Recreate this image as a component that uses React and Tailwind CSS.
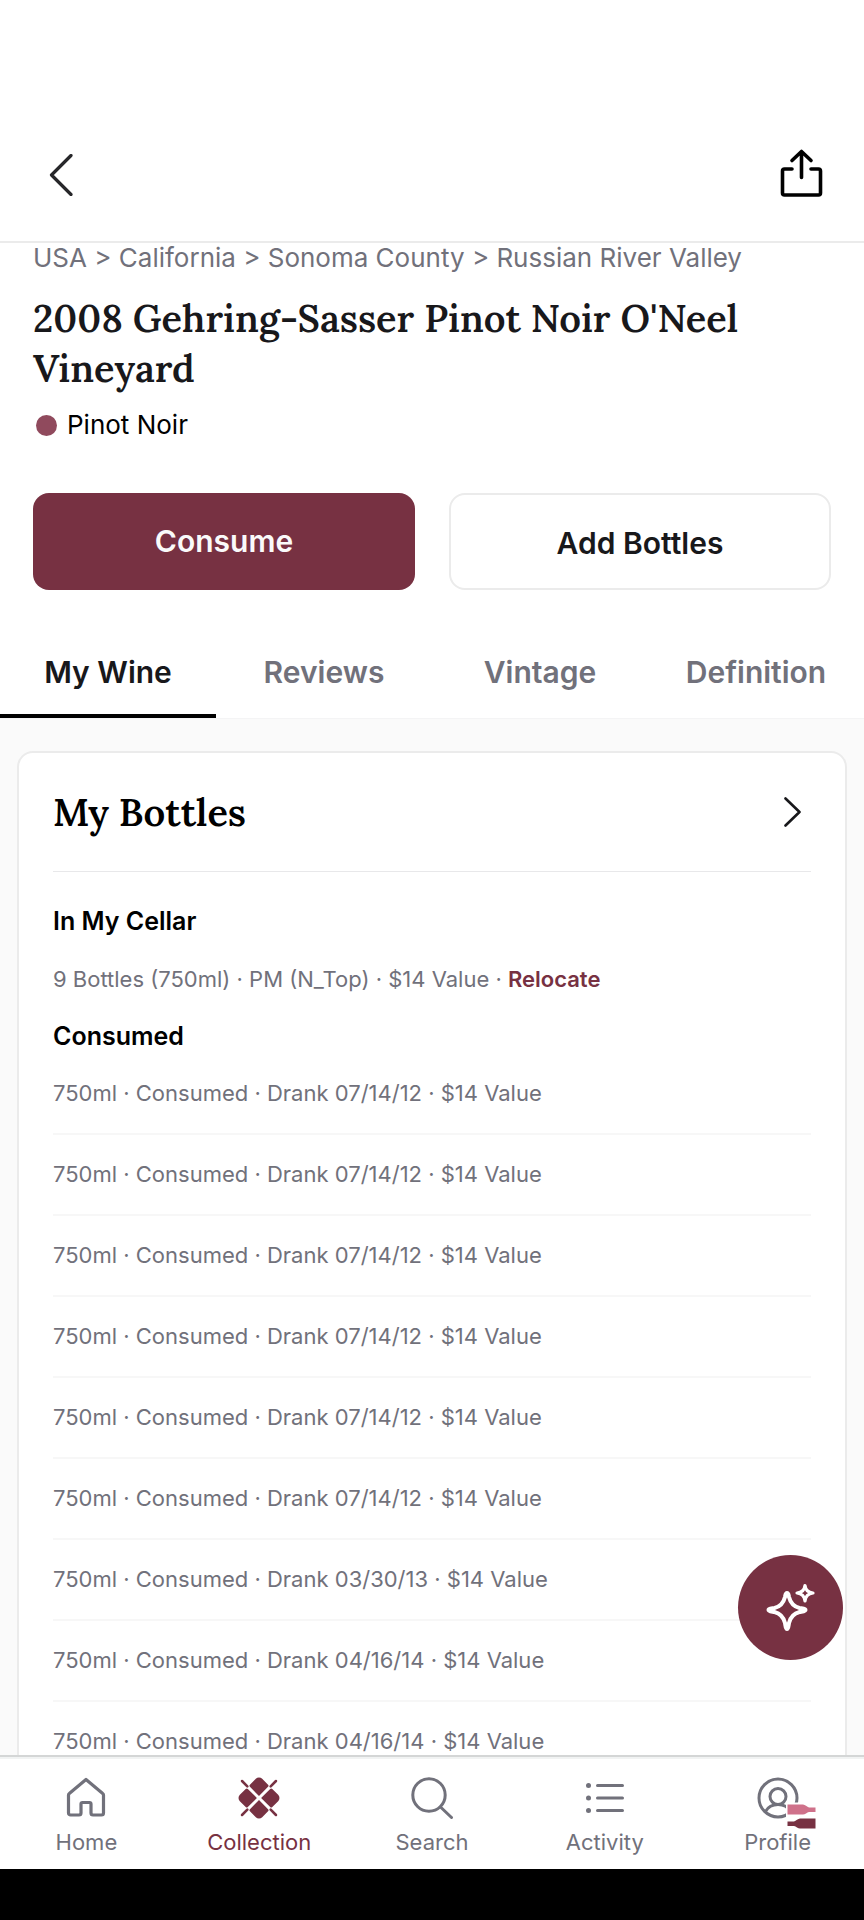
// src/pages/WineDetail.jsx
const crumbs = ["USA", "California", "Sonoma County", "Russian River Valley"];
const tabs = ["My Wine", "Reviews", "Vintage", "Definition"];
const consumed = [
  "07/14/12",
  "07/14/12",
  "07/14/12",
  "07/14/12",
  "07/14/12",
  "07/14/12",
  "03/30/13",
  "04/16/14",
  "04/16/14",
];

const line = { fill: "none", stroke: "currentColor", strokeLinecap: "round", strokeLinejoin: "round" };

function BackIcon() {
  return (
    <svg width="42" height="42" viewBox="0 0 42 42" strokeWidth="3.2" {...line}>
      <path d="M31 1.5 11.5 21 31 40.5" />
    </svg>
  );
}

function ShareIcon() {
  return (
    <svg width="48" height="48" viewBox="0 0 48 48" overflow="visible" strokeWidth="3.6" {...line}>
      <path d="M25.5 26.5V.5M16 9.5l9.5-9 9.5 9" />
      <path d="M16 18H8.5a2 2 0 0 0-2 2V42a2 2 0 0 0 2 2h34a2 2 0 0 0 2-2V20a2 2 0 0 0-2-2H35" />
    </svg>
  );
}

function ChevronIcon() {
  return (
    <svg width="30" height="30" viewBox="0 0 30 30" strokeWidth="2.6" {...line}>
      <path d="m8.5 1.5 14 13.5-14 13.5" />
    </svg>
  );
}

function HomeIcon() {
  return (
    <svg width="42" height="42" viewBox="0 0 42 42" strokeWidth="3.2" {...line}>
      <path d="M21 2.5 4.3 16.5a2 2 0 0 0-.8 1.6V36a2 2 0 0 0 2 2h8.500a2 2 0 0 0 2-2V27a1.500 1.500 0 0 1 1.500-1.500h7A1.500 1.500 0 0 1 26 27v9a2 2 0 0 0 2 2h8.500a2 2 0 0 0 2-2V18.100a2 2 0 0 0-.8-1.600Z" />
    </svg>
  );
}

function CollectionIcon() {
  return (
    <svg width="42" height="42" viewBox="-21 -21 42 42" overflow="visible">
      <g transform="rotate(45)" fill="currentColor">
        {[0, 90, 180, 270].map((a) => (
          <g key={a} transform={`rotate(${a})`}>
            <path d="M1.5 1.5H14.3A1.5 1.5 0 0 1 15.8 3V11.3a4.5 4.5 0 0 1-4.5 4.5H3A1.5 1.5 0 0 1 1.5 14.3Z" />
            <path d="M16.5 0H24" stroke="currentColor" strokeWidth="2.6" strokeLinecap="round" />
          </g>
        ))}
      </g>
    </svg>
  );
}

function SearchIcon() {
  return (
    <svg width="42" height="42" viewBox="0 0 42 42" strokeWidth="3" {...line}>
      <circle cx="18" cy="18" r="16.2" />
      <path d="m29.5 30 11 10.5" />
    </svg>
  );
}

function ActivityIcon() {
  return (
    <svg width="42" height="42" viewBox="0 0 42 42" strokeWidth="3" {...line}>
      <path d="M13.5 8.5h25M13.5 21h25M13.5 33.5h25" />
      <g fill="currentColor" stroke="none">
        <circle cx="4.5" cy="8.5" r="2.5" />
        <circle cx="4.5" cy="21" r="2.5" />
        <circle cx="4.5" cy="33.5" r="2.5" />
      </g>
    </svg>
  );
}

function ProfileIcon() {
  return (
    <svg width="42" height="42" viewBox="0 0 42 42" overflow="visible" strokeWidth="3" {...line}>
      <circle cx="21" cy="21" r="19" />
      <circle cx="21" cy="19.5" r="8" />
      <path d="M8.5 34.5c2.5-4.5 7-7 12.5-7s10 2.5 12.5 7" />
      {/* bottle badge */}
      <g strokeWidth="0">
        <path d="M29 25.5h31v26H29Z" fill="#fff" />
        <path d="M30.5 27.5H46c2 0 4 2.5 6 3h6.5V35H52c-2 .5-4 2.5-6 2.5H30.5Z" fill="#cf718a" />
        <path d="M58.5 41.5H43c-2 0-4 2.5-6 3h-6.5V49H37c2 .5 4 2.5 6 2.5h15.5Z" fill="#773142" />
      </g>
    </svg>
  );
}

function SparkleIcon() {
  return (
    <svg width="50" height="50" viewBox="0 0 50 50" strokeWidth="4" {...line}>
      <path d="M21 10c1.5 0 1.5 1.5 2 4 1.5 6 4.5 9.5 10.5 11 2.5.5 6 .5 6 2s-3.5 1.5-6 2c-6 1.5-9 5-10.5 11-.5 2.5-.5 6-2 6s-1.5-3.5-2-6c-1.5-6-4.5-9.5-10.5-11-2.5-.5-6-.5-6-2s3.5-1.5 6-2c6-1.5 9-5 10.5-11 .5-2.5.5-4 2-4Z" />
      <path strokeWidth="3.2" d="M39 2.5c.5 5 3 7 8 7.5-5 .5-7.5 3-8 8-.5-5-3-7.5-8-8 5-.5 7.5-2.500 8-7.500Z" />
    </svg>
  );
}

const navItems = [
  { label: "Home", Icon: HomeIcon },
  { label: "Collection", Icon: CollectionIcon, active: true },
  { label: "Search", Icon: SearchIcon },
  { label: "Activity", Icon: ActivityIcon },
  { label: "Profile", Icon: ProfileIcon },
];

export default function WineDetail() {
  return (
    <div className="relative flex h-screen flex-col bg-white font-['Inter',sans-serif] text-zinc-900">
      <header className="shrink-0 border-b-2 border-[#ebebeb] pt-[108px]">
        <div className="flex h-[133px] items-center justify-between px-10">
          <button aria-label="Back" className="text-[#27272a]">
            <BackIcon />
          </button>
          <button aria-label="Share" className="text-black">
            <ShareIcon />
          </button>
        </div>
      </header>

      <main className="flex min-h-0 flex-1 flex-col overflow-hidden">
        <section className="shrink-0 px-[33px]">
          <p className="text-[26px] leading-[30px] text-zinc-500">{crumbs.join(" > ")}</p>
          <h1 className="mt-5 font-['Lora','Liberation_Serif',serif] text-[38px] leading-[50px] font-semibold">
            2008 Gehring-Sasser Pinot Noir O'Neel Vineyard
          </h1>
          <div className="mt-4 flex items-center gap-2.5 pl-[3px] text-[26px] leading-[32px] text-black">
            <span className="size-[21px] rounded-full bg-[#904a5d]" />
            Pinot Noir
          </div>
          <div className="mt-[52px] grid grid-cols-2 gap-[34px] text-[30px] font-semibold">
            <button className="h-[97px] rounded-2xl bg-[#773142] text-[#fafafa]">Consume</button>
            <button className="h-[97px] rounded-2xl border-2 border-[#ebebeb] pt-1">Add Bottles</button>
          </div>
        </section>

        <nav className="mt-10 grid shrink-0 grid-cols-4 text-[30px] font-semibold">
          {tabs.map((t, i) => (
            <button
              key={t}
              className={
                i === 0
                  ? "h-[88px] border-b-4 border-black"
                  : "h-[88px] border-b-4 border-transparent text-zinc-500"
              }
            >
              {t}
            </button>
          ))}
        </nav>

        <div className="flex-1 border-t border-[#f4f4f5] bg-[#fafafa] px-[17px] pt-8">
          <section className="rounded-2xl border-2 border-[#ebebeb] bg-white px-[34px]">
            <div className="flex h-[119px] items-center justify-between border-b border-[#e8e8ea] pr-1">
              <h2 className="font-['Lora','Liberation_Serif',serif] text-[38px] leading-[50px] font-semibold text-black">
                My Bottles
              </h2>
              <button aria-label="Open my bottles">
                <ChevronIcon />
              </button>
            </div>

            <h3 className="mt-8 text-[25px] leading-[34px] font-semibold text-black">In My Cellar</h3>
            <p className="mt-6 text-[22px] leading-[34px] text-zinc-500">
              9 Bottles (750ml) · PM (N_Top) · $14 Value ·{" "}
              <a href="#relocate" className="font-semibold text-[#773142]">
                Relocate
              </a>
            </p>

            <h3 className="mt-[22px] text-[25px] leading-[36px] font-semibold text-black">Consumed</h3>
            <ul className="text-[22px] text-zinc-500">
              {consumed.map((date, i) => (
                <li key={i} className="flex h-[81px] items-center border-b-2 border-[#f7f7f7]">
                  750ml · Consumed · Drank {date} · $14 Value
                </li>
              ))}
            </ul>
          </section>
        </div>
      </main>

      <button
        aria-label="Ask the sommelier"
        className="absolute right-[21px] bottom-[260px] grid size-[105px] place-items-center rounded-full bg-[#773142] text-white"
      >
        <SparkleIcon />
      </button>

      <nav className="relative grid h-[114px] shrink-0 grid-cols-5 border-t-2 border-[#d4d6d6] bg-white shadow-[inset_0_2px_0_#f1f3f3]">
        {navItems.map(({ label, Icon, active }) => (
          <a
            key={label}
            href={`#${label.toLowerCase()}`}
            className={
              active
                ? "flex flex-col items-center pt-5 text-[22px] leading-[30px] text-[#773142]"
                : "flex flex-col items-center pt-5 text-[22px] leading-[30px] text-zinc-500"
            }
          >
            <Icon />
            <span className="mt-2">{label}</span>
          </a>
        ))}
      </nav>
      <div className="h-[51px] shrink-0 bg-black" />
    </div>
  );
}
